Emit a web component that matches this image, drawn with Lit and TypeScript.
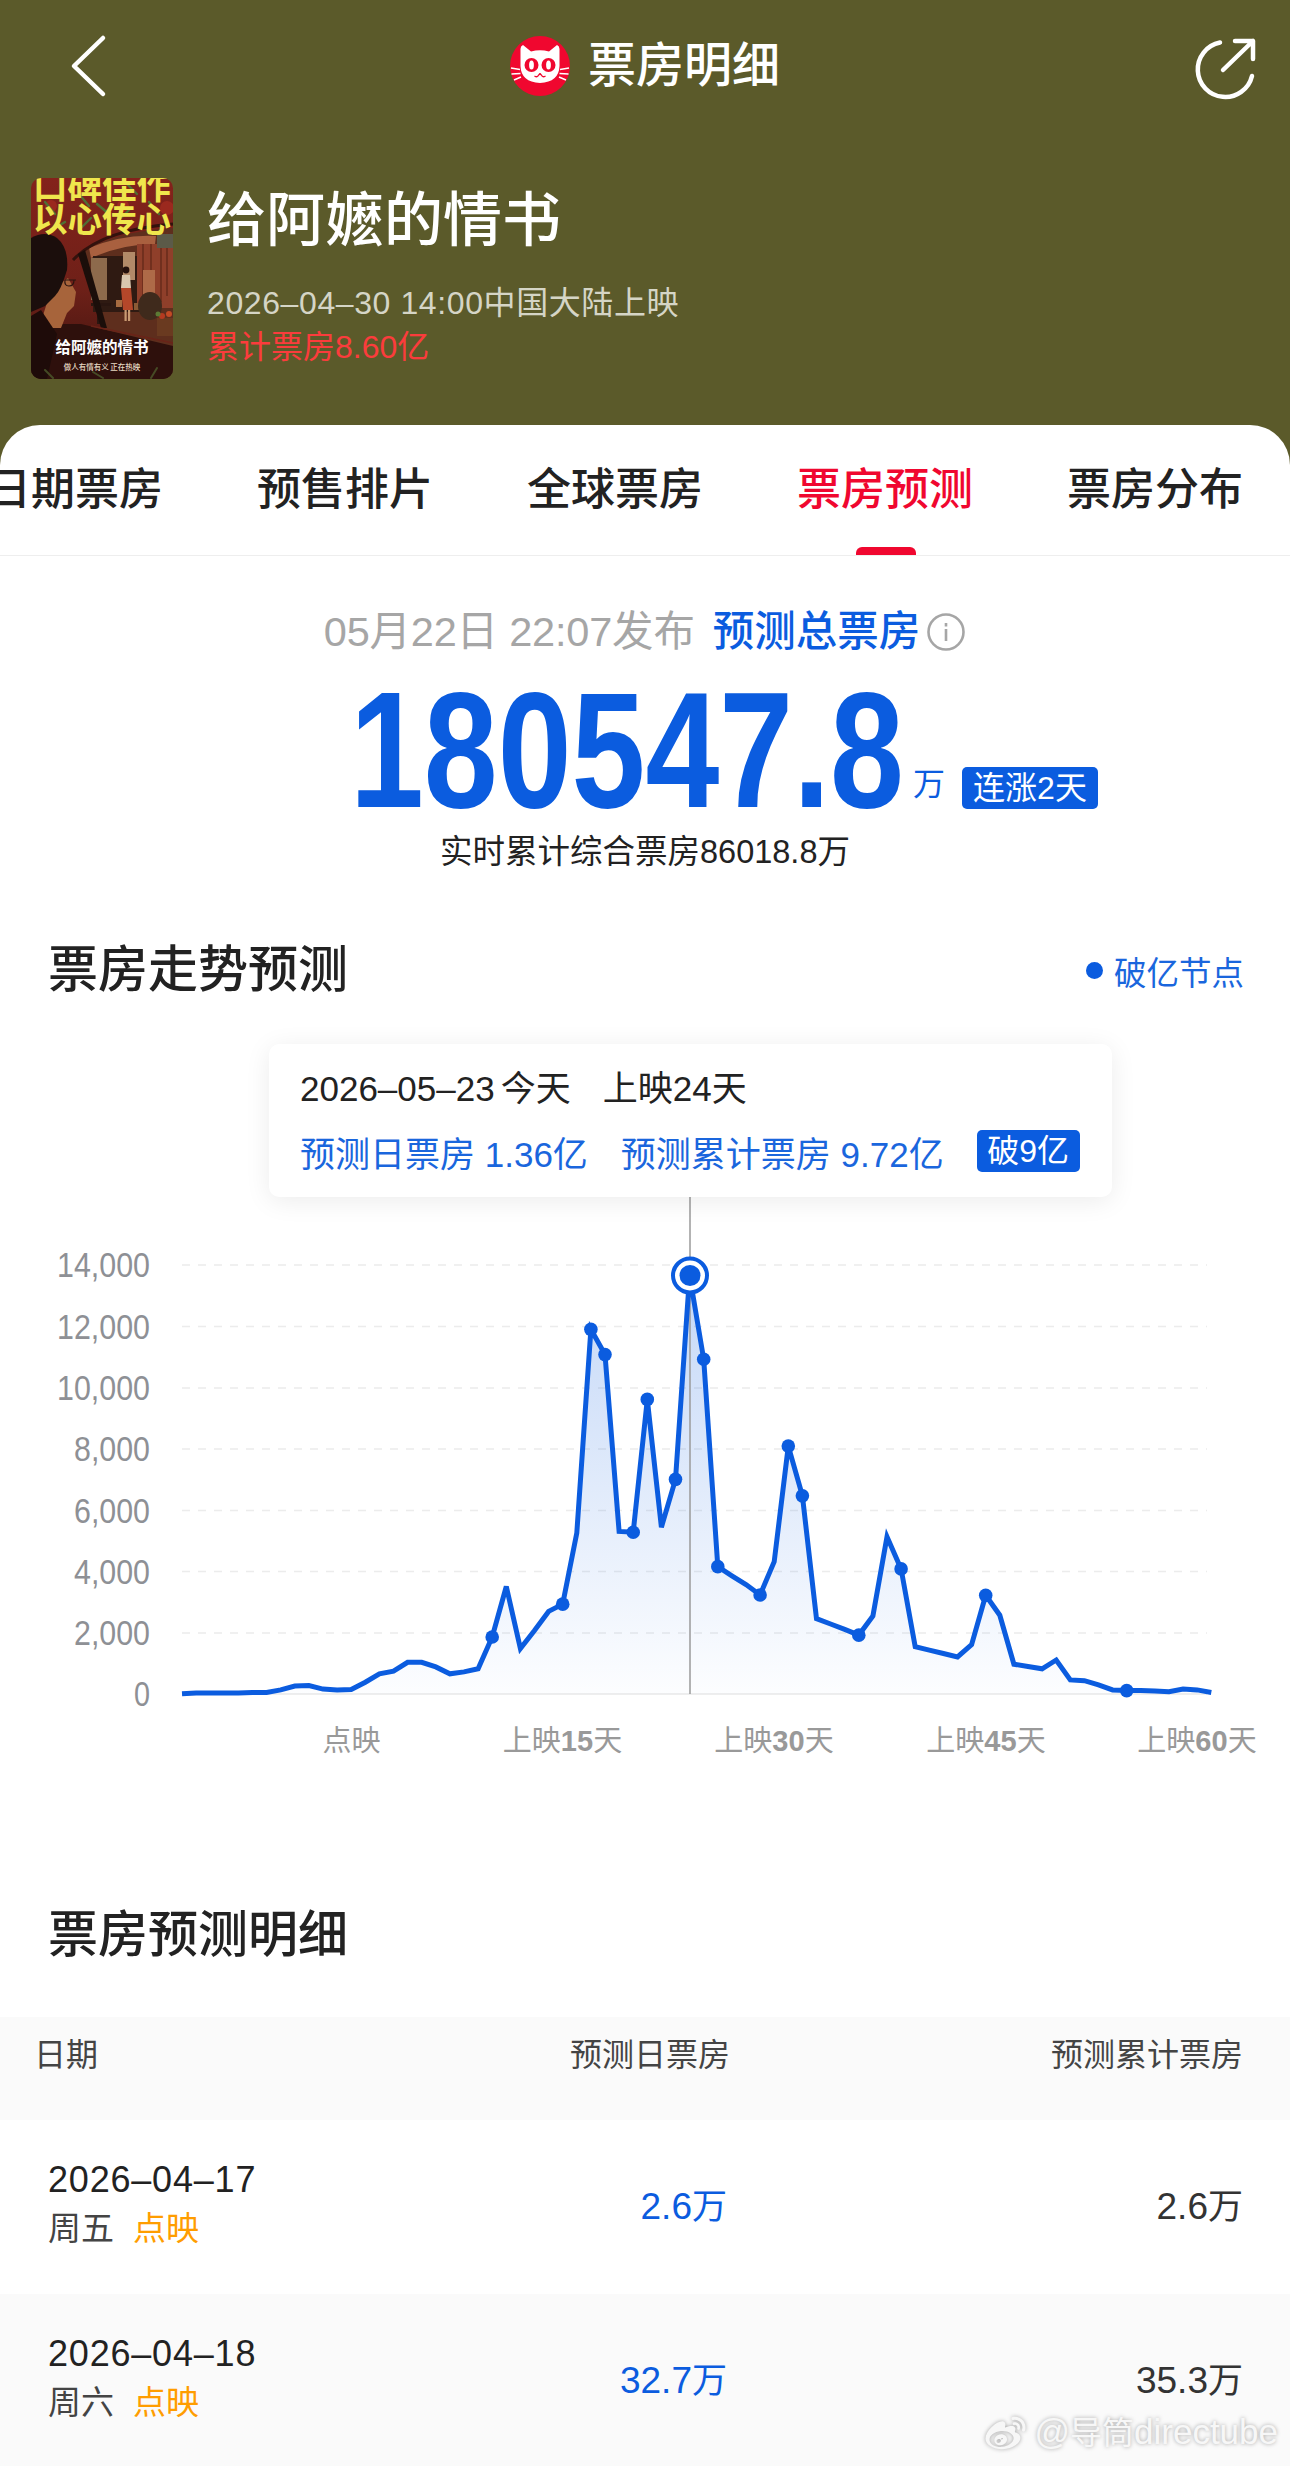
import { LitElement, html, css, svg } from "lit";
import { customElement } from "lit/decorators.js";

const BLUE = "#0b5cdf";
// Y positions of the curve, read off the reference at 2.613 units per pixel from y=1200
const Z = [
  1290, 1288, 1288, 1288, 1288, 1287, 1287, 1280, 1270, 1269, 1278, 1280, 1279, 1260, 1238, 1231, 1208, 1208, 1220,
  1238, 1233, 1225, 1142, 1010, 1172, 1125, 1075, 1056, 870, 338, 404, 866, 868, 521, 855, 730, 197, 416, 958, 982,
  1005, 1032, 945, 643, 773, 1094, 1108, 1122, 1137, 1087, 880, 964, 1167, 1176, 1185, 1194, 1162, 1033, 1085, 1213,
  1219, 1225, 1202, 1254, 1256, 1267, 1280, 1282, 1282, 1283, 1285, 1278, 1280, 1287,
];
const DOTS = [22, 27, 29, 30, 32, 33, 35, 37, 38, 41, 43, 44, 48, 51, 57, 67];
const px = (i: number) => 182 + 14.1 * i;
const py = (i: number) => 1200 + Z[i] / 2.613;
const LINE = Z.map((_, i) => `${i ? "L" : "M"}${px(i).toFixed(1)} ${py(i).toFixed(1)}`).join(" ");
const AREA = `${LINE} L${px(Z.length - 1)} 1694 L182 1694 Z`;
const GRID = [
  { y: 1265, t: "14,000", w: 93 },
  { y: 1326.5, t: "12,000", w: 93 },
  { y: 1388, t: "10,000", w: 93 },
  { y: 1449, t: "8,000", w: 76 },
  { y: 1510.5, t: "6,000", w: 76 },
  { y: 1571.5, t: "4,000", w: 76 },
  { y: 1633, t: "2,000", w: 76 },
  { y: 1694, t: "0", w: 16 },
];
const XL = [
  { x: 351.5, a: "点映", n: "", b: "" },
  { x: 562.5, a: "上映", n: "15", b: "天" },
  { x: 774, a: "上映", n: "30", b: "天" },
  { x: 986, a: "上映", n: "45", b: "天" },
  { x: 1197, a: "上映", n: "60", b: "天" },
];
const ROWS = [
  { d: "2026–04–17", w: "周五", day: "2.6", sum: "2.6", alt: false },
  { d: "2026–04–18", w: "周六", day: "32.7", sum: "35.3", alt: true },
];
const TABS = ["日期票房", "预售排片", "全球票房", "票房预测", "票房分布"];

const poster = svg`
<svg class="poster" viewBox="0 0 142 201" role="img">
  <defs>
    <linearGradient id="pbg" x1="0" y1="0" x2="0" y2="1">
      <stop offset="0" stop-color="#84221b"/><stop offset=".55" stop-color="#6e2018"/><stop offset="1" stop-color="#3e140f"/>
    </linearGradient>
  </defs>
  <rect width="142" height="201" fill="url(#pbg)"/>
  <g fill="#a32c20" opacity=".8">
    <circle cx="62" cy="4" r="7"/><circle cx="136" cy="30" r="7"/><circle cx="20" cy="28" r="6"/><circle cx="92" cy="28" r="6"/>
  </g>
  <g stroke="#4f7034" stroke-width="2.4" fill="none" stroke-linecap="round">
    <path d="M14 24l10 12M48 16l10 12M66 26l12 10M100 30l-14 14M118 24l10 12M60 40l-12 12M96 6l10 10M24 50l10 -6"/>
  </g>
  <path d="M50 76Q78 54 142 50V170L72 152Z" fill="#5e2e1d"/>
  <path d="M58 70Q92 56 125 58L124 66Q92 66 60 80Z" fill="#a9603f"/>
  <rect x="62" y="78" width="62" height="56" fill="#2f1a12"/>
  <rect x="60" y="80" width="16" height="42" fill="#8d6a4c"/>
  <rect x="92" y="74" width="12" height="28" fill="#b28a68"/>
  <rect x="106" y="66" width="36" height="64" fill="#8f3f2a"/>
  <path d="M112 66v60M120 66v64M130 54v70M136 54v64" stroke="#6a2c1c" stroke-width="1.6"/>
  <rect x="112" y="92" width="12" height="28" fill="#ae6a48"/>
  <rect x="126" y="56" width="16" height="14" fill="#5b5a48"/>
  <path d="M60 125h20v3H60zM66 128h3v18h-3z" fill="#2a1610"/>
  <circle cx="95" cy="92" r="3.4" fill="#24100c"/>
  <path d="M91 97h8l1 13h-10z" fill="#d8c6ae"/>
  <path d="M90 110h10l2 22h-10z" fill="#b4472a"/>
  <rect x="93.5" y="132" width="2.2" height="11" fill="#c99a72"/>
  <rect x="97" y="132" width="2.2" height="11" fill="#c99a72"/>
  <rect x="85" y="122" width="6" height="7" fill="#a66b40"/>
  <rect x="103" y="125" width="7" height="7" fill="#8a5a35"/>
  <ellipse cx="119" cy="128" rx="12" ry="14" fill="#3f2a1c"/>
  <path d="M126 140h16v18h-16z" fill="#6a3a20"/>
  <circle cx="131" cy="138" r="3" fill="#b53a20"/><circle cx="138" cy="136" r="3" fill="#c24a25"/><circle cx="127" cy="136" r="2.5" fill="#5c7a34"/>
  <path d="M42 82Q70 52 142 46" stroke="#33120d" stroke-width="3" fill="none"/>
  <path d="M47 76l7 -4L76 150h-6z" fill="#1b0e0a"/>
  <path d="M0 146L50 146L142 168V201H0Z" fill="#2e100c"/>
  <path d="M60 148L142 165" stroke="#6a2318" stroke-width="1.5"/>
  <path d="M20 112L37 100L45 114L43 128L36 135L30 150L8 150Z" fill="#a7643b"/>
  <path d="M0 60Q14 52 26 60Q38 70 36 92Q30 112 24 118L14 128L0 134Z" fill="#1b0e0c"/>
  <path d="M34 102h11M34 102q-1 6 4 6q5 0 5 -6" stroke="#2c1510" stroke-width="1.2" fill="none"/>
  <path d="M0 138L10 132L26 156L16 201H0Z" fill="#1e0b09"/>
  <g stroke="#4c5a2c" stroke-width="2" fill="none" stroke-linecap="round" opacity=".8">
    <path d="M14 192l8 8M126 190l-6 10M62 194l10 6"/>
  </g>
  <text class="py" x="71" y="21" text-anchor="middle">口碑佳作</text>
  <text class="py" x="71" y="54" text-anchor="middle">以心传心</text>
  <text class="pt" x="71" y="175" text-anchor="middle">给阿嬷的情书</text>
  <text class="ps" x="71" y="192" text-anchor="middle">做人有情有义 正在热映</text>
</svg>`;

const catLogo = svg`
<svg class="cat" viewBox="0 0 60 60" role="img">
  <circle cx="30" cy="30" r="30" fill="#f0072f"/>
  <path d="M13 9L21 15.5Q30 13 39 15.5L47 9Q49.500 10 49.500 13V30Q49 46 30 47Q11 46 10.500 30V13Q10.500 10 13 9Z" fill="#fff"/>
  <circle cx="21.500" cy="29" r="7" fill="#f0072f"/><circle cx="38.500" cy="29" r="7" fill="#f0072f"/>
  <ellipse cx="21.500" cy="29" rx="2.400" ry="4.600" fill="#fff"/><ellipse cx="38.500" cy="29" rx="2.400" ry="4.600" fill="#fff"/>
  <path d="M30 37.500l-2 2.400q-2 1.600-3.500 0M30 37.500l2 2.400q2 1.600 3.500 0" stroke="#f0072f" stroke-width="1.300" fill="none"/>
  <path d="M1 32l9 1.500M1.500 38l9 -.5M4 44l7 -3M59 32l-9 1.500M58.500 38l-9 -.5M56 44l-7 -3" stroke="#fff" stroke-width="1.500"/>
</svg>`;

@customElement("app-root")
export class AppRoot extends LitElement {
  static styles = css`
    :host {
      display: block;
      position: relative;
      width: 1290px;
      height: 2466px;
      overflow: hidden;
      background: #fff;
      color: #222;
      font-family: "Liberation Sans", "Noto Sans CJK SC", sans-serif;
    }
    .hero { height: 465px; background: #5b5a2a; color: #fff; }
    .nav {
      height: 132px;
      display: grid;
      grid-template-columns: 1fr auto 1fr;
      align-items: center;
    }
    .back { width: 40px; height: 66px; margin-left: 68px; }
    .brand { display: flex; align-items: center; gap: 18px; }
    .cat { width: 60px; height: 60px; display: block; }
    .brand-name { font-size: 48px; line-height: 60px; font-weight: 500; }
    .share { width: 68px; height: 68px; justify-self: end; margin-right: 29px; margin-top: 4px; }
    .movie { display: flex; gap: 34px; padding: 46px 0 0 31px; }
    .poster { width: 142px; height: 201px; border-radius: 10px; display: block; flex: none; }
    .py { font: 700 34.500px "Noto Sans CJK SC", sans-serif; fill: #efe64c; }
    .pt { font: 700 15.500px "Noto Sans CJK SC", sans-serif; fill: #fff; }
    .ps { font: 500 7.500px "Noto Sans CJK SC", sans-serif; fill: #e6d9c2; }
    .name { font-size: 59px; line-height: 86px; font-weight: 500; }
    .release { font-size: 32px; line-height: 40px; margin-top: 19px; color: #d5d5c6; letter-spacing: 0.6px; }
    .gross { font-size: 32px; line-height: 40px; margin-top: 4px; color: #fb3c3c; }

    .sheet { position: relative; margin-top: -40px; background: #fff; border-radius: 40px 40px 0 0; }
    .tabs {
      display: flex;
      gap: 94px;
      height: 130px;
      box-sizing: content-box;
      padding-left: 0;
      margin-left: -13px;
      border-bottom: 1.500px solid #eee;
      width: 1303px;
    }
    .tab { position: relative; padding-top: 35px; font-size: 44px; line-height: 60px; font-weight: 500; color: #222; white-space: nowrap; }
    .tab.on { color: #f0072f; }
    .tab.on::after {
      content: "";
      position: absolute;
      left: 59px;
      bottom: 0;
      width: 60px;
      height: 8px;
      background: #f0072f;
      border-radius: 6px 6px 0 0;
    }
    .info { display: flex; justify-content: center; align-items: center; padding-top: 51px; height: 50px; box-sizing: content-box; font-size: 41.500px; line-height: 50px; white-space: nowrap; }
    .stamp { color: #a6a6a6; letter-spacing: -0.2px; }
    .total { color: ${css([BLUE] as any)}; font-weight: 500; margin-left: 18px; }
    .i { width: 40px; height: 40px; margin-left: 6px; }
    .bigrow { display: flex; align-items: flex-end; padding-left: 350px; margin-top: 33px; height: 120px; }
    .big {
      width: 555px;
      flex: none;
      font-size: 166px;
      line-height: 120px;
      font-weight: 700;
      color: ${css([BLUE] as any)};
      transform: scaleX(0.8);
      transform-origin: left center;
      white-space: nowrap;
    }
    .unit { font-size: 32px; line-height: 40px; color: ${css([BLUE] as any)}; margin-left: 8px; margin-bottom: 6px; }
    .tag {
      background: ${css([BLUE] as any)};
      color: #fff;
      font-size: 32px;
      border-radius: 5px;
      text-align: center;
      white-space: nowrap;
    }
    .tag.rise { width: 136px; height: 42px; line-height: 42px; margin-left: 17px; margin-bottom: 1px; }
    .sub { margin-top: 20px; text-align: center; font-size: 32.500px; line-height: 44px; color: #222; }
    .sub b { font-weight: 500; }
    .head { display: flex; justify-content: space-between; align-items: center; padding: 0 46px 0 48px; margin-top: 66px; height: 60px; }
    .h2 { font-size: 50px; line-height: 60px; font-weight: 500; color: #222; }
    .legend { display: flex; align-items: center; gap: 11px; font-size: 32.500px; color: #1a66dd; }
    .legend i { width: 17px; height: 17px; border-radius: 50%; background: ${css([BLUE] as any)}; }
    .chart { position: relative; height: 780px; }
    .chart svg { display: block; width: 1290px; height: 780px; }
    .grid { stroke: #ececec; stroke-width: 1.500; stroke-dasharray: 8 8; }
    .ylab { font: 35px "Liberation Sans", sans-serif; fill: #8e9095; }
    .xlab { font: 29px "Liberation Sans", "Noto Sans CJK SC", sans-serif; fill: #999; }
    .xlab .n { font-weight: 700; }
    .tip {
      position: absolute;
      left: 269px;
      top: 44px;
      width: 843px;
      height: 153px;
      box-sizing: border-box;
      padding: 23px 0 0 31px;
      background: #fff;
      border-radius: 10px;
      box-shadow: 0 4px 26px rgba(0, 0, 0, 0.08);
    }
    .tip-1 { display: flex; font-size: 35px; line-height: 44px; color: #222; white-space: nowrap; }
    .tip-1 b { font-weight: 500; }
    .tip-1 .gap { margin-left: 32px; }
    .tip-1 .today { margin-left: 6px; }
    .tip-2 { display: flex; align-items: center; gap: 33px; margin-top: 19px; height: 42px; font-size: 35px; color: #1a66dd; white-space: nowrap; }
    .tag.nine { width: 103px; height: 42px; line-height: 42px; }
    .h2b { margin-top: 125px; }
    .thead {
      display: grid;
      grid-template-columns: 1fr 270px 513px;
      padding: 18px 47px 0 34px;
      height: 103px;
      box-sizing: border-box;
      margin-top: 52px;
      background: #fafafa;
      font-size: 32px;
      line-height: 40px;
      color: #444;
    }
    .r { text-align: right; }
    .row {
      display: grid;
      grid-template-columns: 1fr 270px 516px;
      align-items: center;
      height: 174px;
      padding: 0 47px 0 48px;
      box-sizing: border-box;
    }
    .row.alt { background: #fafafa; }
    .when { align-self: start; padding-top: 38px; }
    .date { font-size: 36px; line-height: 44px; color: #222; letter-spacing: 0.8px; white-space: nowrap; }
    .week { margin-top: 5px; font-size: 33px; line-height: 44px; color: #444; display: flex; gap: 19px; }
    .week em { font-style: normal; color: #ff9d00; }
    .val { font-size: 37px; line-height: 44px; text-align: right; color: #333; font-weight: 500; white-space: nowrap; }
    .val span { font-size: 35px; font-weight: 400; }
    .val.blue { color: ${css([BLUE] as any)}; }
    .wm {
      position: absolute;
      right: 12px;
      bottom: 13px;
      display: flex;
      align-items: center;
      gap: 6px;
      color: #f7f7f7;
      font-size: 32px;
      line-height: 40px;
      text-shadow: 0 0 4px rgba(0, 0, 0, 0.35);
      white-space: nowrap;
    }
    .wm .lat { font-size: 35px; }
    .wm svg { width: 45px; height: 40px; filter: drop-shadow(0 0 2px rgba(0, 0, 0, 0.35)); }
  `;

  render() {
    return html`
      <section class="hero">
        <div class="nav">
          <svg class="back" viewBox="0 0 40 66" fill="none" stroke="#fff" stroke-width="4.500" stroke-linecap="round" stroke-linejoin="round">
            <path d="M35 5L6 33L35 61" />
          </svg>
          <div class="brand">${catLogo}<span class="brand-name">票房明细</span></div>
          <svg class="share" viewBox="0 0 68 68" fill="none" stroke="#fff" stroke-width="4.500" stroke-linecap="round" stroke-linejoin="round">
            <path d="M27 8.500A27.500 27.500 0 1 0 59 42" />
            <path d="M30 36L60 7M42 7H60V25" />
          </svg>
        </div>
        <div class="movie">
          ${poster}
          <div>
            <div class="name">给阿嬷的情书</div>
            <div class="release">2026–04–30 14:00中国大陆上映</div>
            <div class="gross">累计票房8.60亿</div>
          </div>
        </div>
      </section>
      <section class="sheet">
        <div class="tabs">
          ${TABS.map((t, i) => html`<div class="tab ${i === 3 ? "on" : ""}">${t}</div>`)}
        </div>
        <div class="info">
          <span class="stamp">05月22日 22:07发布</span>
          <span class="total">预测总票房</span>
          <svg class="i" viewBox="0 0 40 40" fill="none" stroke="#a6a6a6" stroke-width="2.600">
            <circle cx="20" cy="20" r="17.500" />
            <path d="M20 17v12M20 11v3.500" />
          </svg>
        </div>
        <div class="bigrow">
          <div class="big">180547.8</div>
          <div class="unit">万</div>
          <div class="tag rise">连涨2天</div>
        </div>
        <div class="sub">实时累计综合票房<b>86018.8</b>万</div>
        <div class="head">
          <div class="h2">票房走势预测</div>
          <div class="legend"><i></i>破亿节点</div>
        </div>
        <div class="chart">
          <svg viewBox="0 1000 1290 780">
            <defs>
              <linearGradient id="fill" gradientUnits="userSpaceOnUse" x1="0" y1="1275" x2="0" y2="1694">
                <stop offset="0" stop-color="#0b5cdf" stop-opacity=".24" />
                <stop offset="1" stop-color="#0b5cdf" stop-opacity=".01" />
              </linearGradient>
            </defs>
            ${GRID.map((g, i) =>
              i === GRID.length - 1
                ? svg`<path d="M182 1694H1207" stroke="#eee" stroke-width="2"/>`
                : svg`<path class="grid" d="M182 ${g.y}H1207"/>`
            )}
            ${GRID.map(
              (g) =>
                svg`<text class="ylab" x="150" y="${g.y + 12}" text-anchor="end" textLength="${g.w}" lengthAdjust="spacingAndGlyphs">${g.t}</text>`
            )}
            ${XL.map(
              (l) =>
                svg`<text class="xlab" x="${l.x}" y="1751" text-anchor="middle">${l.a}<tspan class="n">${l.n}</tspan>${l.b}</text>`
            )}
            <path d="${AREA}" fill="url(#fill)" />
            <path d="M690 1197V1694" stroke="#9a9a9a" stroke-width="1.500" />
            <path d="${LINE}" fill="none" stroke="${BLUE}" stroke-width="5" stroke-linejoin="miter" />
            ${DOTS.map((i) => svg`<circle cx="${px(i)}" cy="${py(i)}" r="6.800" fill="${BLUE}"/>`)}
            <circle cx="690" cy="1275.500" r="17" fill="#fff" stroke="${BLUE}" stroke-width="4" />
            <circle cx="690" cy="1275.500" r="10.500" fill="${BLUE}" />
          </svg>
          <div class="tip">
            <div class="tip-1">
              <b>2026–05–23</b><span class="today">今天</span><span class="gap">上映</span><b>24</b><span>天</span>
            </div>
            <div class="tip-2">
              <span>预测日票房 1.36亿</span>
              <span>预测累计票房 9.72亿</span>
              <div class="tag nine">破9亿</div>
            </div>
          </div>
        </div>
        <div class="h2 h2b" style="padding-left:48px">票房预测明细</div>
        <div class="thead">
          <div>日期</div>
          <div class="r">预测日票房</div>
          <div class="r">预测累计票房</div>
        </div>
        ${ROWS.map(
          (r) => html`
            <div class="row ${r.alt ? "alt" : ""}">
              <div class="when">
                <div class="date">${r.d}</div>
                <div class="week">${r.w}<em>点映</em></div>
              </div>
              <div class="val blue">${r.day}<span>万</span></div>
              <div class="val">${r.sum}<span>万</span></div>
            </div>
          `
        )}
      </section>
      <div class="wm">
        <svg viewBox="0 0 24 24" fill="#f7f7f7">
          <path
            d="M10.098 20.323c-3.977.391-7.414-1.406-7.672-4.02-.259-2.609 2.759-5.047 6.74-5.441 3.979-.394 7.413 1.404 7.671 4.018.259 2.6-2.759 5.049-6.737 5.439l-.002.004zM9.05 17.219c-.384.616-1.208.884-1.829.602-.612-.279-.793-.991-.406-1.593.379-.595 1.176-.861 1.793-.601.622.263.82.972.442 1.592zm1.27-1.627c-.141.237-.449.353-.689.253-.236-.09-.313-.361-.177-.586.138-.227.436-.346.672-.24.239.09.315.36.18.601l.014-.028zm.176-2.719c-1.893-.493-4.033.45-4.857 2.118-.836 1.704-.026 3.591 1.886 4.21 1.983.64 4.318-.341 5.132-2.179.8-1.793-.201-3.642-2.161-4.149zm7.563-1.224c-.346-.105-.57-.18-.405-.615.375-.977.42-1.804 0-2.404-.781-1.112-2.915-1.053-5.364-.03 0 0-.766.331-.571-.271.376-1.217.315-2.224-.27-2.809-1.338-1.337-4.869.045-7.888 3.08C1.309 10.87 0 13.273 0 15.348c0 3.981 5.099 6.395 10.086 6.395 6.536 0 10.888-3.801 10.888-6.82 0-1.822-1.547-2.854-2.915-3.284v.01zm1.908-5.092c-.766-.856-1.908-1.187-2.96-.962-.436.09-.706.511-.616.932.09.42.511.691.932.602.511-.105 1.067.044 1.442.465.376.421.466.977.316 1.473-.136.406.089.856.51.992.405.119.857-.105.992-.512.33-1.021.12-2.178-.646-3.035l.03.045zm2.418-2.195c-1.576-1.757-3.905-2.419-6.054-1.968-.496.104-.812.587-.706 1.081.104.496.586.813 1.082.707 1.532-.331 3.185.15 4.296 1.383 1.112 1.246 1.429 2.943.947 4.416-.165.48.106 1.007.586 1.157.479.165.991-.104 1.157-.586.675-2.088.241-4.478-1.338-6.235l.03.045z"
          />
        </svg>
        <span><span class="lat">@</span>导筒<span class="lat">directube</span></span>
      </div>
    `;
  }
}
